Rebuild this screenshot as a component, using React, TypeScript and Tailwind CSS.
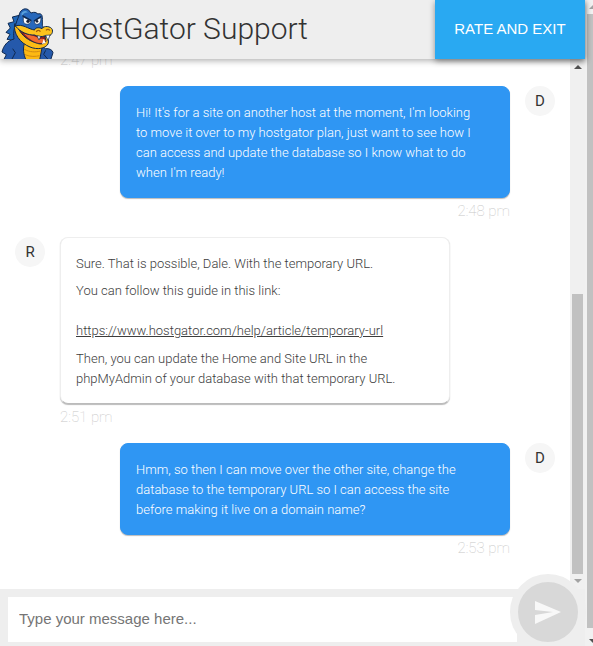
import { useState } from 'react';
import type { ReactNode } from 'react';
import { clsx } from 'clsx';

interface Message {
  id: number;
  author: string;
  mine: boolean;
  time: string;
  body: ReactNode;
}

const messages: Message[] = [
  {
    id: 1,
    author: 'D',
    mine: true,
    time: '2:48 pm',
    body: (
      <p>
        Hi! It's for a site on another host at the moment, I'm looking to move it over to my
        hostgator plan, just want to see how I can access and update the database so I know what to
        do when I'm ready!
      </p>
    ),
  },
  {
    id: 2,
    author: 'R',
    mine: false,
    time: '2:51 pm',
    body: (
      <>
        <p className="mb-[7px]">Sure. That is possible, Dale. With the temporary URL.</p>
        <p className="mb-2">
          You can follow this guide in this link:
          <br />
          <br />
          <a href="https://www.hostgator.com/help/article/temporary-url" className="underline">
            https://www.hostgator.com/help/article/temporary-url
          </a>
        </p>
        <p>
          Then, you can update the Home and Site URL in the phpMyAdmin of your database with that
          temporary URL.
        </p>
      </>
    ),
  },
  {
    id: 3,
    author: 'D',
    mine: true,
    time: '2:53 pm',
    body: (
      <p>
        Hmm, so then I can move over the other site, change the database to the temporary URL so I
        can access the site before making it live on a domain name?
      </p>
    ),
  },
];

function Mascot() {
  return (
    <svg viewBox="0 0 165 177" className="h-[59px] w-[55px] shrink-0" aria-hidden="true">
      <g stroke="#10294f" strokeWidth="3" strokeLinejoin="round">
        {/* back spikes */}
        <path d="M62 45 L37 51 L42 65 L24 70 L31 84 L18 97 L30 103 L21 118 L60 124 L66 80 Z" fill="#1e66b8" />
        {/* neck, arms and shoulders */}
        <path d="M50 70 C40 84 40 104 42 117 C22 122 10 138 6 156 L19 164 L11 180 H152 L159 158 C157 149 148 145 136 146 L112 128 L70 100 Z" fill="#2559ab" />
        <path d="M38 146 L46 158 L36 177 M137 151 L131 163 L143 177" fill="none" />
        {/* belly */}
        <path d="M74 128 L126 143 L119 180 H78 C70 163 68 144 74 128 Z" fill="#fdb913" />
        <path d="M73 148 C89 157 107 157 122 153 M75 164 C91 171 107 170 119 167" fill="none" stroke="#d18a14" />
        {/* lower jaw */}
        <path d="M44 71 C39 100 60 129 90 141 C112 150 136 146 144 132 C147 124 145 115 140 110 L62 82 Z" fill="#fdbb16" />
        {/* open mouth */}
        <path d="M56 87 C66 107 86 123 112 130 C124 134 135 131 138 123 L134 106 L103 103 C84 103 69 97 56 87 Z" fill="#8a1f1d" />
        <path d="M72 101 C92 105 109 108 120 117 C129 115 136 117 137 123 C125 137 95 126 72 101 Z" fill="#f26a30" stroke="none" />
        {/* head */}
        <path d="M46 78 C49 66 53 57 57 47 C59 31 73 22 85 29 L93 39 C103 35 110 37 113 42 C123 39 128 44 127 58 L127 76 C134 86 121 99 104 98 C80 94 66 79 46 78 Z" fill="#2868bb" />
        {/* snout */}
        <path d="M46 78 C68 70 85 88 104 90 C104 83 117 81 126 86 C131 76 153 78 157 89 C160 101 150 111 137 107 C126 111 112 111 104 105 C84 106 62 97 46 78 Z" fill="#fdc31d" />
      </g>
      <path d="M64 41 C68 31 80 31 84 38 C75 37 68 42 66 50 Z" fill="#5aa1db" />
      <path d="M70 51 L93 63 C90 76 72 76 70 63 Z" fill="#fff" stroke="#10294f" strokeWidth="2" />
      <path d="M103 64 L122 52 C125 69 114 77 105 71 Z" fill="#fff" stroke="#10294f" strokeWidth="2" />
      <path d="M67 47 L94 62 M102 63 L124 49" stroke="#10294f" strokeWidth="4" />
      <circle cx="84" cy="64" r="5" fill="#17213a" />
      <circle cx="111" cy="64" r="4" fill="#17213a" />
      <path d="M109 96 C111 90 119 90 121 95 M138 91 C142 86 148 88 149 92" fill="none" stroke="#a35d0b" strokeWidth="4" />
      <path d="M111 107 L117 120 L122 109 Z M137 106 L144 122 L150 105 Z" fill="#fff" stroke="#10294f" strokeWidth="2" />
      <path d="M126 132 L131 117 L137 129 Z" fill="#fff" />
    </svg>
  );
}

function Timestamp({ time, mine }: { time: string; mine: boolean }) {
  return (
    <time
      className={clsx(
        'block h-[39px] text-[15px] leading-[26px] font-thin text-[#c8c8c8]',
        mine && 'text-right',
      )}
    >
      {time}
    </time>
  );
}

function ChatMessage({ message }: { message: Message }) {
  const { author, mine, time, body } = message;

  return (
    <li className={clsx('flex gap-[15px] px-[15px]', mine && 'flex-row-reverse')}>
      <span className="flex size-[30px] shrink-0 items-center justify-center rounded-full bg-[#f6f6f6] text-[15px] text-[#333]">
        {author}
      </span>
      <div className="w-[390px] min-w-0">
        <div
          className={clsx(
            'rounded-lg border pt-4 pr-8 pb-[14px] pl-[15px] text-[13px] leading-5 font-light',
            mine
              ? 'border-[#2f96f3] bg-[#2f96f3] text-white shadow-[0_1px_1px_#bbb]'
              : 'border-[#eee] border-b-[#bbb] bg-white text-[#3c3c3c] shadow-[0_1px_1px_#bbb]',
          )}
        >
          {body}
        </div>
        <Timestamp time={time} mine={mine} />
      </div>
    </li>
  );
}

function InnerScrollbar() {
  return (
    <div className="flex w-[15px] shrink-0 flex-col items-center justify-between bg-[#f0f0f0] pt-1.5 pb-1.5" aria-hidden="true">
      <svg viewBox="0 0 8 4" className="h-1 w-2">
        <path d="M0 4 L4 0 L8 4 Z" fill="#505050" />
      </svg>
      <div className="mt-auto mb-[5px] h-[54%] w-[11px] bg-[#c1c1c1]" />
      <svg viewBox="0 0 8 4" className="h-1 w-2">
        <path d="M0 0 L4 4 L8 0 Z" fill="#a3a3a3" />
      </svg>
    </div>
  );
}

function PageScrollbar() {
  return (
    <div className="flex w-2 shrink-0 flex-col overflow-hidden bg-[#f1f1f1] pt-[5px] pb-[3px] pl-[2px]" aria-hidden="true">
      <svg viewBox="0 0 8 4" className="ml-[2px] h-1 w-2 shrink-0">
        <path d="M0 4 L4 0 L8 4 Z" fill="#a3a3a3" />
      </svg>
      <div className="mt-[5px] mb-[11px] w-[11px] flex-1 bg-[#c1c1c1]" />
      <svg viewBox="0 0 8 4" className="ml-[2px] h-1 w-2 shrink-0">
        <path d="M0 0 L4 4 L8 0 Z" fill="#505050" />
      </svg>
    </div>
  );
}

export default function App() {
  const [draft, setDraft] = useState('');

  return (
    <div className="flex h-screen overflow-hidden bg-white font-[Roboto,sans-serif]">
      <div className="flex min-w-0 flex-1 flex-col">
        <header className="relative z-10 flex h-[59px] shrink-0 bg-[#eee] shadow-[0_2px_6px_rgba(0,0,0,0.3)]">
          <Mascot />
          <h1 className="ml-[5px] flex-1 text-[30px] leading-[58px] font-light whitespace-nowrap text-[#333]">
            HostGator Support
          </h1>
          <button
            type="button"
            className="w-[150px] bg-[#29a9f2] font-['Liberation_Sans',Arial,sans-serif] text-[15px] text-white shadow-[0_2px_6px_rgba(0,0,0,0.4)]"
          >
            RATE AND EXIT
          </button>
        </header>

        <main className="flex min-h-0 flex-1">
          <div className="flex min-w-0 flex-1 flex-col justify-end overflow-hidden pb-[15px]">
            <div className="px-[60px]">
              <Timestamp time="2:47 pm" mine={false} />
            </div>
            <ul>
              {messages.map((message) => (
                <ChatMessage key={message.id} message={message} />
              ))}
            </ul>
          </div>
          <InnerScrollbar />
        </main>

        <form
          className="relative flex h-[57px] shrink-0 bg-[#eee] pt-2 pr-[68px] pb-1 pl-2"
          onSubmit={(event) => {
            event.preventDefault();
            setDraft('');
          }}
        >
          <input
            type="text"
            aria-label="Message"
            placeholder="Type your message here..."
            value={draft}
            onChange={(event) => setDraft(event.target.value)}
            className="min-w-0 flex-1 bg-white px-[11px] font-['Liberation_Sans',Arial,sans-serif] text-[15px] text-[#333] outline-none placeholder:text-[#757575]"
          />
          <button
            type="submit"
            aria-label="Send"
            className="absolute -right-px -bottom-1 flex size-[76px] items-center justify-center rounded-full border-8 border-[#eee] bg-[#d8d8d8]"
          >
            <svg viewBox="0 0 26 23" className="h-[23px] w-[26px]">
              <path d="M0 0 L26 11 L0 23 V14 L18 11 L0 9 Z" fill="#f8f8f8" />
            </svg>
          </button>
        </form>
      </div>
      <PageScrollbar />
    </div>
  );
}
